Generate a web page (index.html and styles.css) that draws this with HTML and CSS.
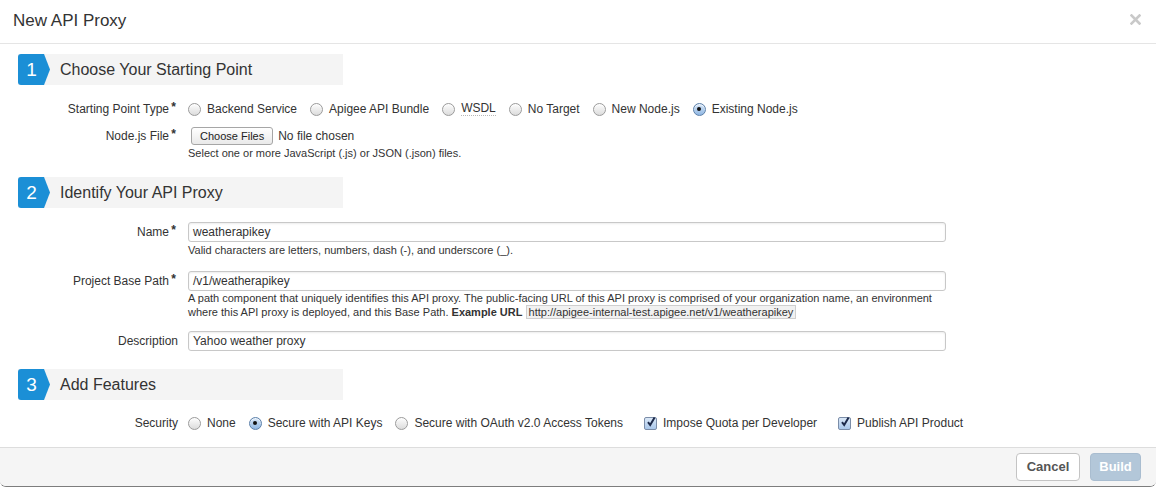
FILE: index.html
```html
<!DOCTYPE html>
<html>
<head>
<meta charset="utf-8">
<link rel="stylesheet" href="styles.css">
</head>
<body>
<div class="modal">
  <div class="header">
    <h1 class="title">New API Proxy</h1>
    <svg class="close" width="11" height="11" viewBox="0 0 11 11"><path d="M1.5 1.5 L9.5 9.5 M9.5 1.5 L1.5 9.5" stroke="#c9c9c9" stroke-width="2.6" stroke-linecap="square"/></svg>
  </div>
  <div class="body">
    <div class="section-head">
      <div class="badge"><svg width="32" height="31" viewBox="0 0 32 31"><path d="M3 0 H26 L32 15.5 L26 31 H3 Q0 31 0 28 V3 Q0 0 3 0 Z" fill="#1b8fd6"/></svg><span class="num">1</span></div>
      <span class="sec-title">Choose Your Starting Point</span>
    </div>
    <div class="row r1">
      <div class="label">Starting Point Type<span class="req">*</span></div>
      <div class="ctrl options">
        <label class="opt"><span class="radio"></span>Backend Service</label>
        <label class="opt"><span class="radio"></span>Apigee API Bundle</label>
        <label class="opt"><span class="radio"></span><span class="abbr">WSDL</span></label>
        <label class="opt"><span class="radio"></span>No Target</label>
        <label class="opt"><span class="radio"></span>New Node.js</label>
        <label class="opt"><span class="radio on"></span>Existing Node.js</label>
      </div>
    </div>
    <div class="row r2">
      <div class="label">Node.js File<span class="req">*</span></div>
      <div class="ctrl">
        <div class="file"><span class="btn-file">Choose Files</span><span class="nofile">No file chosen</span></div>
        <div class="help">Select one or more JavaScript (.js) or JSON (.json) files.</div>
      </div>
    </div>

    <div class="section-head s2">
      <div class="badge"><svg width="32" height="31" viewBox="0 0 32 31"><path d="M3 0 H26 L32 15.5 L26 31 H3 Q0 31 0 28 V3 Q0 0 3 0 Z" fill="#1b8fd6"/></svg><span class="num">2</span></div>
      <span class="sec-title">Identify Your API Proxy</span>
    </div>
    <div class="row r-name">
      <div class="label">Name<span class="req">*</span></div>
      <div class="ctrl">
        <div class="input">weatherapikey</div>
        <div class="help h1">Valid characters are letters, numbers, dash (-), and underscore (_).</div>
      </div>
    </div>
    <div class="row r-path">
      <div class="label">Project Base Path<span class="req">*</span></div>
      <div class="ctrl">
        <div class="input">/v1/weatherapikey</div>
        <div class="help">A path component that uniquely identifies this API proxy. The public-facing URL of this API proxy is comprised of your organization name, an environment<br>where this API proxy is deployed, and this Base Path. <b>Example URL</b> <span class="url">http://apigee-internal-test.apigee.net/v1/weatherapikey</span></div>
      </div>
    </div>
    <div class="row r-desc">
      <div class="label">Description</div>
      <div class="ctrl">
        <div class="input">Yahoo weather proxy</div>
      </div>
    </div>

    <div class="section-head s3">
      <div class="badge"><svg width="32" height="31" viewBox="0 0 32 31"><path d="M3 0 H26 L32 15.5 L26 31 H3 Q0 31 0 28 V3 Q0 0 3 0 Z" fill="#1b8fd6"/></svg><span class="num">3</span></div>
      <span class="sec-title">Add Features</span>
    </div>
    <div class="row r-sec">
      <div class="label">Security</div>
      <div class="ctrl options">
        <label class="opt"><span class="radio"></span>None</label>
        <label class="opt"><span class="radio on"></span>Secure with API Keys</label>
        <label class="opt"><span class="radio"></span>Secure with OAuth v2.0 Access Tokens</label>
        <label class="opt chk"><span class="checkbox"><svg width="12" height="12" viewBox="0 0 12 12"><path d="M3 6.2 L5.2 9 L9.6 1.6" fill="none" stroke="#1d2a4a" stroke-width="2"/></svg></span>Impose Quota per Developer</label>
        <label class="opt chk"><span class="checkbox"><svg width="12" height="12" viewBox="0 0 12 12"><path d="M3 6.2 L5.2 9 L9.6 1.6" fill="none" stroke="#1d2a4a" stroke-width="2"/></svg></span>Publish API Product</label>
      </div>
    </div>
  </div>
  <div class="footer">
    <span class="btn cancel">Cancel</span>
    <span class="btn build">Build</span>
  </div>
</div>
</body>
</html>
```
FILE: styles.css
```css
html, body {
  margin: 0;
  padding: 0;
  background: #fff;
}
body {
  font-family: "Liberation Sans", Arial, sans-serif;
  color: #333;
}
.modal {
  width: 1156px;
  height: 487px;
  box-sizing: border-box;
  display: flex;
  flex-direction: column;
  border-bottom: 1px solid #7d7d7d;
  border-radius: 0 0 6px 6px;
  overflow: hidden;
}
.header {
  height: 43px;
  border-bottom: 1px solid #e5e5e5;
  display: flex;
  align-items: center;
  justify-content: space-between;
  padding: 0 15px 0 13px;
  flex: none;
}
.title {
  margin: 0;
  font-size: 17px;
  font-weight: normal;
  color: #333;
  position: relative;
  top: -1px;
}
.close {
  display: block;
  position: relative;
  top: -2px;
}
.body {
  flex: 1;
  padding: 10px 18px 0 18px;
}
.section-head {
  width: 325px;
  height: 31px;
  background: #f4f4f4;
  display: flex;
  align-items: center;
}
.s2 { margin-top: 17px; }
.s3 { margin-top: 18px; }
.badge {
  position: relative;
  width: 32px;
  height: 31px;
  flex: none;
}
.badge svg { display: block; }
.num {
  position: absolute;
  left: 0;
  top: 0;
  width: 27px;
  line-height: 31px;
  text-align: center;
  color: #fff;
  font-size: 19px;
}
.sec-title {
  margin-left: 10px;
  font-size: 16px;
  color: #333;
}
.row {
  display: flex;
  align-items: flex-start;
}
.label {
  width: 160px;
  flex: none;
  text-align: right;
  font-size: 12px;
  line-height: 20px;
  color: #333;
}
.req {
  display: inline-block;
  width: 9px;
  text-align: center;
  font-weight: bold;
  font-size: 12px;
  vertical-align: top;
  position: relative;
  top: -2px;
}
.ctrl {
  margin-left: 10px;
  font-size: 12px;
}
.options {
  display: flex;
  align-items: center;
  height: 20px;
}
.opt {
  display: flex;
  align-items: center;
  margin-right: 13px;
  white-space: nowrap;
}
.opt.chk { margin-left: 8px; }
.radio {
  width: 11px;
  height: 11px;
  border-radius: 50%;
  border: 1px solid #9b9b9b;
  background: linear-gradient(#fdfdfd, #dcdcdc);
  margin-right: 6px;
  position: relative;
  flex: none;
  box-shadow: inset 0 1px 1px rgba(255,255,255,0.8);
}
.radio.on {
  border-color: #5b7fa9;
  background: linear-gradient(#d7e6f7, #8fb7e3);
}
.radio.on::after {
  content: "";
  position: absolute;
  left: 3.5px;
  top: 3.5px;
  width: 4px;
  height: 4px;
  border-radius: 50%;
  background: #111;
}
.checkbox {
  width: 11px;
  height: 11px;
  border: 1px solid #7b8da8;
  border-radius: 2px;
  background: linear-gradient(#dbe8f7, #a9c7ea);
  margin-right: 6px;
  position: relative;
  flex: none;
}
.checkbox svg {
  position: absolute;
  left: 0;
  top: -2px;
}
.abbr {
  display: inline-block;
  line-height: 13px;
  border-bottom: 1px dotted #b8b8b8;
}
.r1 { margin-top: 14px; }
.r2 { margin-top: 7px; }
.file {
  display: flex;
  align-items: center;
  height: 20px;
}
.btn-file {
  display: inline-block;
  height: 16px;
  line-height: 16px;
  padding: 0 8px;
  border: 1px solid #a6a6a6;
  border-radius: 3px;
  background: linear-gradient(#ffffff, #e9e9e9);
  font-size: 11px;
  margin-left: 3px;
  color: #222;
}
.nofile {
  margin-left: 5px;
  font-size: 12px;
}
.help {
  font-size: 11px;
  line-height: 14px;
  color: #333;
}
.help.h1 { margin-top: 1px; }
.r-name { margin-top: 14px; }
.r-path { margin-top: 14px; }
.r-desc { margin-top: 12px; }
.r-sec { margin-top: 13px; }
.input {
  width: 758px;
  height: 20px;
  box-sizing: border-box;
  border: 1px solid #c8c8c8;
  border-radius: 3px;
  box-shadow: inset 0 1px 2px rgba(0,0,0,0.08);
  padding: 0 4px;
  line-height: 18px;
  font-size: 12px;
  color: #333;
}
.url {
  display: inline-block;
  background: #f1f1f1;
  border: 1px solid #cfcfcf;
  padding: 0 2px;
  line-height: 12px;
  font-size: 11px;
}
.footer {
  flex: none;
  height: 38px;
  border-top: 1px solid #dddddd;
  background: #f5f5f5;
  display: flex;
  align-items: center;
  justify-content: flex-end;
  padding-right: 15px;
  gap: 10px;
}
.btn {
  display: inline-block;
  height: 28px;
  line-height: 26px;
  box-sizing: border-box;
  border-radius: 4px;
  font-size: 13px;
  font-weight: bold;
  text-align: center;
}
.cancel {
  width: 64px;
  background: #fff;
  border: 1px solid #c4c4c4;
  color: #555;
}
.build {
  width: 51px;
  background: #b3c7d9;
  border: 1px solid #a9bdd0;
  color: #fff;
}
```
